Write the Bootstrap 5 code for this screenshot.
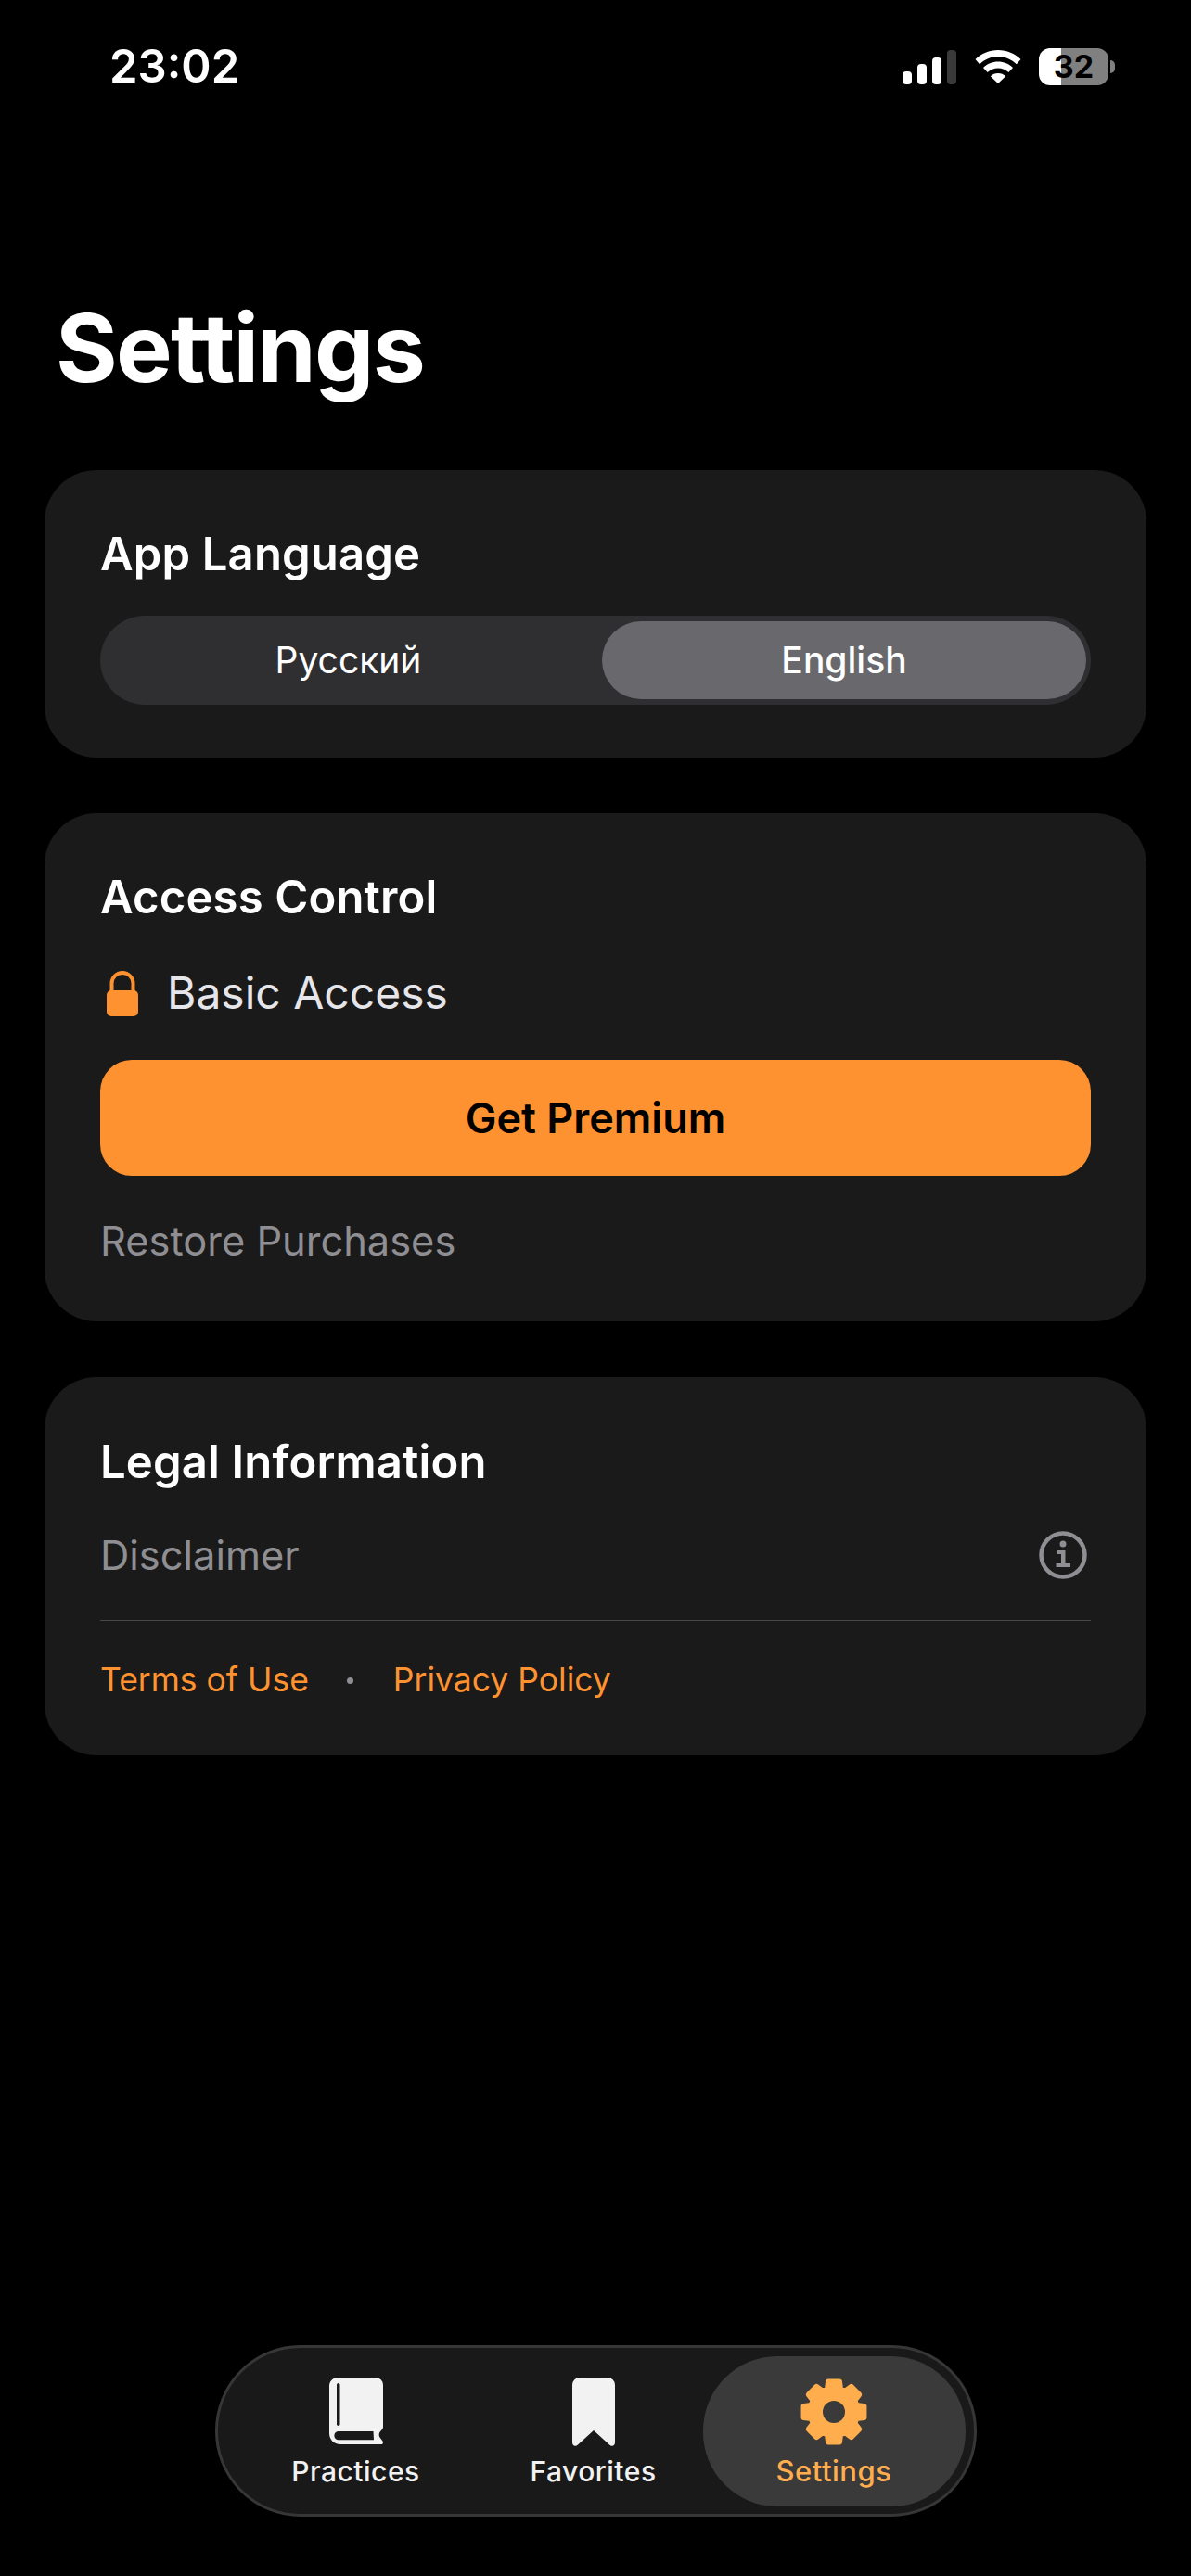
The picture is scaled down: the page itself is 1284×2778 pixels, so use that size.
<!DOCTYPE html>
<html lang="en">
<head>
    <meta charset="UTF-8">
    <meta name="viewport" content="width=device-width, initial-scale=1.0">
    <title>Settings</title>
    <link href="https://cdn.jsdelivr.net/npm/bootstrap@5.3.3/dist/css/bootstrap.min.css" rel="stylesheet">
    <style>
        body {
            background-color: #000;
            color: #fff;
            font-family: Inter, "Liberation Sans", sans-serif;
            width: 1284px;
            height: 2778px;
            overflow: hidden;
        }
        .screen {
            height: 2778px;
        }
        .status-row {
            height: 40px;
            margin-top: 52px;
            padding-left: 118px;
            padding-right: 82px;
        }
        .status-time {
            font-size: 49px;
            font-weight: 600;
            line-height: 40px;
        }
        .signal-bars {
            gap: 6px;
            margin-right: 20px;
        }
        .signal-bars span {
            display: block;
            width: 10px;
            background-color: #fff;
            border-radius: 4px;
        }
        .signal-bars .bar-off {
            background-color: #3a3a3a;
        }
        .battery-wrap {
            margin-left: 19px;
        }
        .battery-body {
            width: 75px;
            height: 40px;
            border-radius: 12px;
            background: linear-gradient(90deg, #fff 0, #fff 24px, #808080 24px);
            color: #000;
            font-size: 34px;
            font-weight: 700;
            line-height: 40px;
            text-align: center;
        }
        .battery-nub {
            width: 5px;
            height: 14px;
            margin-left: 2px;
            background-color: #808080;
            border-radius: 0 7px 7px 0;
        }
        .page-title {
            font-size: 102px;
            font-weight: 700;
            letter-spacing: -1.8px;
            line-height: 110px;
            margin: 228px 0 77px 60px;
        }
        .group-stack {
            gap: 60px;
            padding: 0 48px;
        }
        .group-card {
            background-color: #1a1a1a;
            border-radius: 56px;
            padding: 61px 60px 57px;
        }
        .legal-card {
            padding-top: 62px;
            padding-bottom: 56px;
        }
        .group-title {
            font-size: 49px;
            font-weight: 600;
            letter-spacing: 0.15px;
            line-height: 60px;
            margin: 0;
        }
        .lang-switch {
            height: 96px;
            margin-top: 36px;
            padding: 6px 5px 6px 0;
            background-color: #2f2f31;
            border-radius: 48px;
        }
        .lang-option {
            flex: 0 0 535px;
            font-size: 39px;
            font-weight: 400;
            line-height: 84px;
            text-align: center;
            border-radius: 42px;
        }
        .lang-active {
            flex: 0 0 522px;
            margin-left: auto;
            background-color: #69696d;
            font-weight: 500;
        }
        .access-line {
            gap: 31px;
            margin-top: 43px;
            padding-left: 7px;
            height: 60px;
            color: #e5e5ea;
            font-size: 48px;
            line-height: 60px;
        }
        .btn.premium-btn {
            display: block;
            width: 100%;
            height: 125px;
            margin-top: 42px;
            background-color: #ff9230;
            border: 0;
            border-radius: 34px;
            color: #000;
            font-size: 45px;
            font-weight: 600;
        }
        .muted-line {
            color: #8e8e93;
            font-size: 43.4px;
            line-height: 60px;
        }
        .restore-line {
            margin-top: 40px;
        }
        .disclaimer-row {
            height: 52px;
            margin-top: 44px;
            padding-right: 4px;
        }
        .rule-line {
            height: 1px;
            margin-top: 44px;
            background-color: #48484a;
        }
        .legal-links {
            margin-top: 39px;
            color: #ff9230;
            font-size: 35.5px;
            line-height: 50px;
        }
        .link-dot {
            width: 7px;
            height: 7px;
            margin: 0 43px 0 41px;
            background-color: #8e8e93;
            border-radius: 50%;
        }
        .tabs-wrap {
            margin-top: auto;
            padding-bottom: 64px;
        }
        .tab-pill {
            width: 821px;
            height: 185px;
            padding: 9px 9px 8px;
            background-color: #191919;
            border: 3px solid #363636;
            border-radius: 92px;
        }
        .tab-item {
            color: #f2f2f2;
            font-size: 30px;
            font-weight: 500;
            letter-spacing: 0.5px;
            line-height: 40px;
            gap: 7px;
            padding-top: 23px;
        }
        .tab-first {
            width: 280px;
        }
        .tab-mid {
            width: 232px;
        }
        .tab-active {
            width: 283px;
            margin-left: auto;
            background-color: #3a3a3a;
            border-radius: 80px;
            color: #ffad4d;
            font-size: 31px;
        }
    </style>
</head>
<body>
<div class="screen d-flex flex-column">
    <div class="status-row d-flex justify-content-between align-items-center">
        <div class="status-time">23:02</div>
        <div class="d-flex align-items-center">
            <div class="signal-bars d-flex align-items-end">
                <span style="height: 14px"></span>
                <span style="height: 22px"></span>
                <span style="height: 29px"></span>
                <span class="bar-off" style="height: 37px"></span>
            </div>
            <svg width="50" height="36" viewBox="0 0 50 36" fill="#fff">
                <path d="M25 0C15.5 0 7 3.8 0.5 10l4.6 5.2C10.4 10.2 17.3 7 25 7s14.6 3.2 19.9 8.2l4.6-5.2C43 3.8 34.5 0 25 0z"/>
                <path d="M25 12.5c-6.2 0-11.8 2.4-16 6.4l4.6 5.2c3-2.8 7-4.6 11.4-4.6s8.4 1.8 11.4 4.6l4.6-5.2c-4.2-4-9.8-6.4-16-6.4z"/>
                <path d="M25 25c-3.2 0-6.1 1.2-8.2 3.3L25 36l8.2-7.7C31.100 26.200 28.200 25 25 25z"/>
            </svg>
            <div class="battery-wrap d-flex align-items-center">
                <div class="battery-body">32</div>
                <div class="battery-nub"></div>
            </div>
        </div>
    </div>

    <h1 class="page-title">Settings</h1>

    <div class="group-stack d-flex flex-column">
        <section class="group-card">
            <h2 class="group-title">App Language</h2>
            <div class="lang-switch d-flex">
                <div class="lang-option">Русский</div>
                <div class="lang-option lang-active">English</div>
            </div>
        </section>

        <section class="group-card">
            <h2 class="group-title">Access Control</h2>
            <div class="access-line d-flex align-items-center">
                <svg width="34" height="49" viewBox="0 0 34 49">
                    <path d="M5.500 22V13.500a11.500 11.500 0 0 1 23 0V22" fill="none" stroke="#ff9230" stroke-width="4"/>
                    <rect x="0" y="21" width="34" height="28" rx="5" fill="#ff9230"/>
                </svg>
                <span>Basic Access</span>
            </div>
            <button type="button" class="btn premium-btn">Get Premium</button>
            <div class="muted-line restore-line">Restore Purchases</div>
        </section>

        <section class="group-card legal-card">
            <h2 class="group-title">Legal Information</h2>
            <div class="disclaimer-row d-flex justify-content-between align-items-center">
                <span class="muted-line">Disclaimer</span>
                <svg width="52" height="52" viewBox="0 0 52 52" fill="#8e8e93">
                    <circle cx="26" cy="26" r="23.500" fill="none" stroke="#8e8e93" stroke-width="4.500"/>
                    <circle cx="26" cy="14" r="3.500"/>
                    <path d="M20 21h8.500v14H34v4H18.500v-4H24V25h-4z"/>
                </svg>
            </div>
            <div class="rule-line"></div>
            <div class="legal-links d-flex align-items-center">
                <span>Terms of Use</span>
                <span class="link-dot"></span>
                <span>Privacy Policy</span>
            </div>
        </section>
    </div>

    <div class="tabs-wrap d-flex justify-content-center">
        <nav class="tab-pill d-flex">
            <div class="tab-item tab-first d-flex flex-column align-items-center">
                <svg width="58" height="74" viewBox="0 0 58 74">
                    <path d="M9 0H50a8 8 0 0 1 8 8V53c0 1.500-.5 2.500-2 4-2.500 2.500-3 5-1.500 7.500l3 4c1 1.500.2 3.500-1.500 3.500H12C5 72 0 67 0 60V9C0 4 4 0 9 0z" fill="#f2f2f2"/>
                    <rect x="8" y="6" width="3.500" height="46" rx="1.750" fill="#191919"/>
                    <path d="M10 58H47.500L48 67.300H10a4.650 4.650 0 0 1 0-9.300z" fill="#191919"/>
                </svg>
                <span>Practices</span>
            </div>
            <div class="tab-item tab-mid d-flex flex-column align-items-center">
                <svg width="46" height="74" viewBox="0 0 46 74">
                    <path d="M8 0h30a8 8 0 0 1 8 8V70c0 4-4 5-6.500 2L23 57 6.500 72C4 75 0 74 0 70V8a8 8 0 0 1 8-8z" fill="#f2f2f2"/>
                </svg>
                <span>Favorites</span>
            </div>
            <div class="tab-item tab-active d-flex flex-column align-items-center">
                <svg width="74" height="74" viewBox="-37 -37 74 74">
                    <path d="M6.010-32.450L7.030-24.510L12.360-22.300L18.690-27.200L27.200-18.690L22.300-12.360L24.510-7.030L32.450-6.010L32.450 6.010L24.510 7.030L22.300 12.360L27.200 18.690L18.690 27.200L12.360 22.300L7.030 24.510L6.010 32.450L-6.010 32.450L-7.030 24.510L-12.360 22.300L-18.690 27.200L-27.200 18.690L-22.300 12.360L-24.510 7.030L-32.450 6.010L-32.450-6.010L-24.510-7.030L-22.300-12.360L-27.200-18.690L-18.690-27.200L-12.360-22.300L-7.030-24.510L-6.010-32.450Z" fill="#ffad4d" stroke="#ffad4d" stroke-width="6" stroke-linejoin="round"/>
                    <circle r="12" fill="#3a3a3a"/>
                </svg>
                <span>Settings</span>
            </div>
        </nav>
    </div>
</div>

<script src="https://cdn.jsdelivr.net/npm/bootstrap@5.3.3/dist/js/bootstrap.bundle.min.js"></script>
</body>
</html>
